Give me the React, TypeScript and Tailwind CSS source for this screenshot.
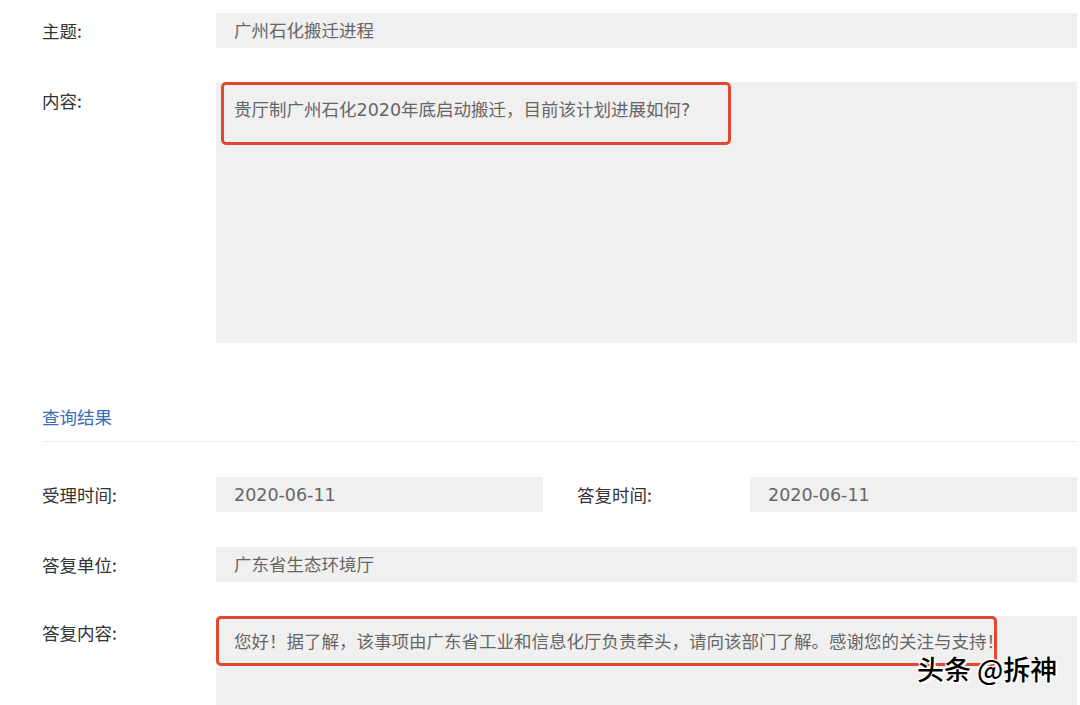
import type { ReactNode } from "react";

const font = "font-['Noto_Sans_CJK_SC','Noto_Sans',sans-serif]";
const valueFont = "font-['DejaVu_Sans','Noto_Sans_CJK_SC',sans-serif]";

function Label({ children, className = "" }: { children: ReactNode; className?: string }) {
  return (
    <div className={`text-[17.5px] leading-6 text-[#333] ${className}`}>
      {children}
    </div>
  );
}

function Field({ children, className = "" }: { children: ReactNode; className?: string }) {
  return (
    <div
      className={`flex h-[35px] items-center bg-[#f0f0f0] pl-[18px] text-[17.5px] leading-6 text-[#666] ${valueFont} ${className}`}
    >
      {children}
    </div>
  );
}

function Row({ label, children }: { label: string; children: ReactNode }) {
  return (
    <div className="grid grid-cols-[174px_1fr] items-center">
      <Label>{label}</Label>
      {children}
    </div>
  );
}

export default function App() {
  return (
    <div className={`relative h-[705px] w-[1080px] overflow-hidden bg-white ${font}`}>
      <div className="pl-[42px] pr-[3px] pt-[13px]">
        <Row label="主题:">
          <Field>广州石化搬迁进程</Field>
        </Row>

        <div className="mt-[34px] grid grid-cols-[174px_1fr]">
          <Label className="pt-[7px]">内容:</Label>
          <div className="h-[261px] bg-[#f0f0f0] pl-[5px]">
            <div
              className={`w-[510px] rounded-[5px] border-[3px] border-[#e4472f] pb-[20px] pl-[10px] pt-[13px] text-[17.5px] leading-6 text-[#666] ${valueFont}`}
            >
              贵厅制广州石化2020年底启动搬迁，目前该计划进展如何?
            </div>
          </div>
        </div>

        <div className="mt-[62px] border-b border-[#eeeeee] pb-[12px] text-[17.5px] leading-6 text-[#3a6db3]">
          查询结果
        </div>

        <div className="mt-[35px] grid grid-cols-[174px_1fr_207px_1fr] items-center">
          <Label>受理时间:</Label>
          <Field>2020-06-11</Field>
          <Label className="pl-[34px]">答复时间:</Label>
          <Field>2020-06-11</Field>
        </div>

        <div className="mt-[35px]">
          <Row label="答复单位:">
            <Field>广东省生态环境厅</Field>
          </Row>
        </div>

        <div className="mt-[34px] grid grid-cols-[174px_1fr]">
          <Label className="pt-[5px]">答复内容:</Label>
          <div className="h-[150px] bg-[#f0f0f0]">
            <div
              className={`w-[781px] whitespace-nowrap rounded-[5px] border-[3px] border-[#e4472f] pb-[9px] pl-[15px] pt-[11px] text-[17.5px] leading-6 text-[#666] ${valueFont}`}
            >
              您好！据了解，该事项由广东省工业和信息化厅负责牵头，请向该部门了解。感谢您的关注与支持！
            </div>
          </div>
        </div>
      </div>

      <div className="absolute left-[917px] top-[653px] text-[27px] font-medium leading-8 text-black [text-shadow:1px_1px_0_#fff,-1px_-1px_0_#fff,1px_-1px_0_#fff,-1px_1px_0_#fff,2px_2px_1px_#fff]">
        头条 @拆神
      </div>
    </div>
  );
}
